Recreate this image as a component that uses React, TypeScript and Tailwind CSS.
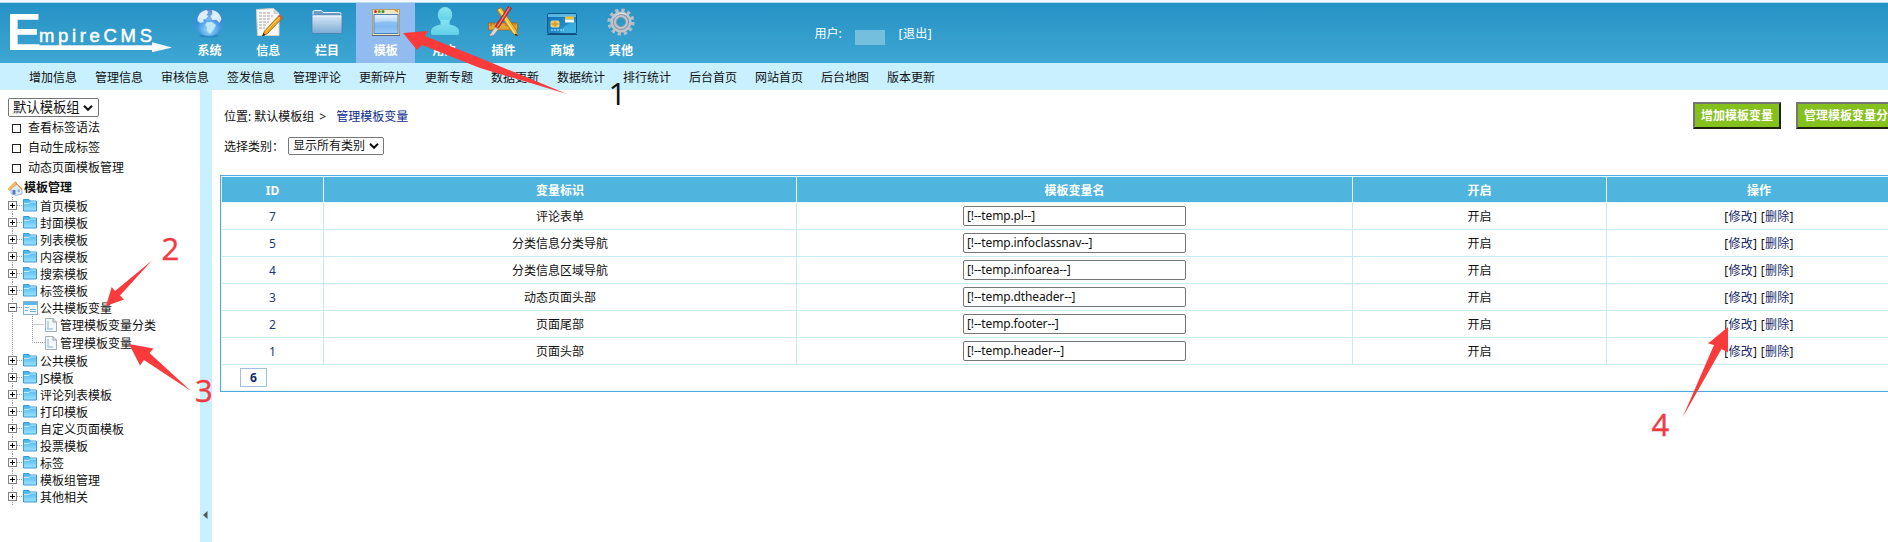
import React from 'react';

type IconProps = { children: React.ReactNode };

const IconBox = ({ children }: IconProps) => (
  <svg width="32" height="34" viewBox="0 0 32 34" className="block">
    {children}
  </svg>
);

const GlobeIcon = () => (
  <IconBox>
    <ellipse cx="16" cy="32" rx="10" ry="1.500" fill="#1b6fa8" opacity="0.500" />
    <circle cx="16" cy="18.500" r="13.700" fill="url(#globe)" stroke="#4a94dc" strokeWidth="0.600" />
    <path d="M4.500 14c1-4 5-7.500 9-8l2 2-2 3 2 1-3 3-2 0 0 3-3 1-3-2z" fill="#e4f3ff" opacity="0.900" />
    <path d="M19 6c5 1 8.500 4 9.500 9l-2 4-3-3-4 0-2-4 2-2z" fill="#e4f3ff" opacity="0.900" />
    <path d="M14 18l5 0 4 3-2 4-4 5-3-3 0-4-2-2z" fill="#c6ebfb" opacity="0.900" />
    <ellipse cx="16" cy="11" rx="10" ry="5.500" fill="#fff" opacity="0.250" />
  </IconBox>
);

const NoteIcon = () => (
  <IconBox>
    <g transform="translate(0 2)">
      <path d="M4.500 3.500l17-1 5.500 5V29.500H5.500z" fill="#f8f8f4" stroke="#d8d4c4" />
      <path d="M21.500 2.500v5.500h5z" fill="#d5d5cf" />
      <path d="M7 7h11M7 10h14M7 13h12M7 16h10M7 19h8M7 22h6" stroke="#a2a8aa" strokeWidth="1" strokeDasharray="3 1" />
      <path d="M10.500 30l2-5L27 9.500l3 3L15.500 27.500z" fill="#f3a51f" stroke="#8a4e0a" strokeWidth="0.700" />
      <path d="M26 10.500l2-2 3 3-2 2z" fill="#d65a37" />
      <path d="M13.500 25.500L28 11" stroke="#ffd766" />
      <path d="M10.500 30l1-3 2 2z" fill="#222" />
    </g>
  </IconBox>
);

const BigFolderIcon = () => (
  <IconBox>
    <g transform="translate(0 1.500)">
      <path d="M2 6.500q0-1.500 1.500-1.500h7l1.500 2h16.500q1.500 0 1.500 1.500v3H2z" fill="#6f9cc0" stroke="#e6f2fa" />
      <rect x="1" y="9.500" width="30" height="18.500" rx="1.200" fill="url(#folderBig)" stroke="#4a7fae" strokeWidth="0.800" />
      <path d="M2 10.500h28" stroke="#f2f8fd" />
    </g>
  </IconBox>
);

const WindowIcon = () => (
  <IconBox>
    <rect x="2.500" y="5.500" width="27" height="26" fill="#f1e7c8" stroke="#b39d6b" />
    <circle cx="5.500" cy="7.500" r="1.500" fill="#d3312b" />
    <circle cx="9.300" cy="7.500" r="1.500" fill="#6f9b24" />
    <circle cx="13" cy="7.500" r="1.500" fill="#3a8e2b" />
    <path d="M24 6l4 3v-3z" fill="#e7912b" />
    <rect x="4" y="10.500" width="24" height="19" fill="url(#pane)" stroke="#4c7cb6" />
    <path d="M5 19q11-3 22-1v11H5z" fill="#77b4ee" opacity="0.550" />
    <path d="M2 31.500h28" stroke="#5a6678" />
  </IconBox>
);

const UserIcon = () => (
  <IconBox>
    <ellipse cx="16" cy="11" rx="7.200" ry="8" fill="url(#person)" />
    <path d="M11.500 16h9v4.500c5 1 9.500 3 9.500 7V29.500q0 1.500-2 1.500H4q-2 0-2-1.500v-2c0-4 4.500-6 9.500-7z" fill="url(#person)" />
  </IconBox>
);

const ToolsIcon = () => (
  <IconBox>
    <rect x="1.500" y="19" width="29" height="7" fill="#e2a23a" stroke="#a0611a" strokeWidth="0.700" />
    <path d="M4 19v3M7 19v2M10 19v3M13 19v2M19 19v3M22 19v2M25 19v3M28 19v2" stroke="#8c5a12" strokeWidth="0.800" />
    <path d="M10 6l4-2.500 15.500 23 1.500 5.500-5-2.500z" fill="#f6bb31" stroke="#a46a12" strokeWidth="0.700" />
    <path d="M12 5l16 25" stroke="#fff0a4" />
    <path d="M21.500 2.500l3 1.500-13 20-3.500-1.500z" fill="#d9362c" stroke="#8d1f18" strokeWidth="0.600" />
    <path d="M22.500 3.500L10 23.500" stroke="#ffb3a8" strokeWidth="0.800" />
    <path d="M8 23.500l3.500 1.500-5 6.500-4.500 .500z" fill="#dcd9d2" stroke="#7a7a7a" strokeWidth="0.500" />
    <path d="M29 29.500l2 2.500-3.500-1z" fill="#222" />
  </IconBox>
);

const CardIcon = () => (
  <IconBox>
    <rect x="1.500" y="9.500" width="29" height="20" rx="1.500" fill="url(#card)" stroke="#0d568f" />
    <path d="M2 11q0-1 1-1h26q1 0 1 1v2H2z" fill="#79d0f2" opacity="0.700" />
    <path d="M14 29q3-9 16-11v10q0 1-1 1z" fill="#54c3ea" opacity="0.500" />
    <rect x="5" y="17" width="8" height="6" rx="1" fill="#f3bd43" stroke="#fbe8a2" strokeWidth="0.800" />
    <path d="M5 20h8M9 17v6" stroke="#b97b12" strokeWidth="0.600" />
    <rect x="19" y="12.500" width="9" height="3" fill="#f3bf30" />
    <rect x="19" y="15.500" width="9" height="3" fill="#f7f7f7" />
    <path d="M5 26h13" stroke="#d5f1fc" strokeDasharray="2 1" />
    <path d="M1 30.500h30" stroke="#174a70" />
  </IconBox>
);

const GearIcon = () => (
  <IconBox>
    <circle cx="16" cy="18" r="11.800" fill="none" stroke="#b4bdc6" strokeWidth="3.600" strokeDasharray="3.300 2.878" />
    <circle cx="16" cy="18" r="7.600" fill="none" stroke="#bcc4cc" strokeWidth="6" />
    <circle cx="16" cy="18" r="7.600" fill="none" stroke="#8f9aa6" strokeWidth="1.200" />
    <circle cx="16" cy="18" r="4.600" fill="none" stroke="#8a949f" strokeWidth="0.800" />
    <path d="M9.500 13a8.500 8.500 0 0 1 11-2.500" fill="none" stroke="#e6eaee" strokeWidth="1" />
  </IconBox>
);

const Gradients = () => (
  <svg width="0" height="0" className="absolute">
    <defs>
      <radialGradient id="globe" cx="0.5" cy="0.75" r="0.8">
        <stop offset="0" stopColor="#9fdcfb" />
        <stop offset="0.5" stopColor="#4598e6" />
        <stop offset="1" stopColor="#1f63c0" />
      </radialGradient>
      <linearGradient id="folderBig" x1="0" y1="0" x2="0" y2="1">
        <stop offset="0" stopColor="#dbe9f6" />
        <stop offset="1" stopColor="#7aa9d3" />
      </linearGradient>
      <linearGradient id="pane" x1="0" y1="0" x2="0" y2="1">
        <stop offset="0" stopColor="#e8f4ff" />
        <stop offset="0.6" stopColor="#8dc0f2" />
        <stop offset="1" stopColor="#bfe2fd" />
      </linearGradient>
      <linearGradient id="person" x1="0" y1="0" x2="0" y2="1">
        <stop offset="0" stopColor="#84e4f0" />
        <stop offset="1" stopColor="#62cfe6" />
      </linearGradient>
      <linearGradient id="card" x1="0" y1="0" x2="1" y2="1">
        <stop offset="0" stopColor="#0f6db5" />
        <stop offset="1" stopColor="#2ba3da" />
      </linearGradient>
      <linearGradient id="folderSmall" x1="0" y1="0" x2="0" y2="1">
        <stop offset="0" stopColor="#45b0ee" />
        <stop offset="1" stopColor="#9be4fd" />
      </linearGradient>
    </defs>
  </svg>
);

const Logo = () => (
  <svg width="180" height="60" viewBox="0 3 180 60" className="block shrink-0 fill-white font-['Liberation_Sans',sans-serif] font-bold">
    <text x="6.500" y="50" fontSize="52" textLength="35" lengthAdjust="spacingAndGlyphs">E</text>
    <text x="39" y="42" fontSize="18.500" fontWeight="400" stroke="#fff" strokeWidth="0.500" textLength="113">mpireCMS</text>
    <rect x="12" y="45.300" width="141" height="4.700" />
    <polygon points="152,42.300 172,47.500 152,52.300" />
  </svg>
);

const tabs = [
  { label: '系统', Icon: GlobeIcon },
  { label: '信息', Icon: NoteIcon },
  { label: '栏目', Icon: BigFolderIcon },
  { label: '模板', Icon: WindowIcon, active: true },
  { label: '用户', Icon: UserIcon },
  { label: '插件', Icon: ToolsIcon },
  { label: '商城', Icon: CardIcon },
  { label: '其他', Icon: GearIcon },
];

const quickLinks = [
  '增加信息', '管理信息', '审核信息', '签发信息', '管理评论', '更新碎片', '更新专题',
  '数据更新', '数据统计', '排行统计', '后台首页', '网站首页', '后台地图', '版本更新',
];

const Header = () => (
  <header className="shrink-0">
    <div className="h-[3px] border-b border-[#b5dcec] bg-[#f3f9fd]" />
    <div className="flex h-[60px] bg-linear-to-b from-[#2592c5] to-[#3ea6d2]">
      <Logo />
      {tabs.map(({ label, Icon, active }) => (
        <div
          key={label}
          className={`flex w-[58.8px] shrink-0 flex-col items-center pt-px text-xs leading-[18px] font-bold text-white ${active ? 'bg-[#92bcef]' : ''}`}
        >
          <Icon />
          <span className="mt-1">{label}</span>
        </div>
      ))}
      <div className="ml-[164px] flex items-center pt-px text-xs text-white">
        <span>用户:</span>
        <span className="mt-2 ml-[13px] h-[15px] w-[30px] bg-[#74bfde]" />
        <span className="ml-[14px] tracking-[0.4px]">[退出]</span>
      </div>
    </div>
    <nav className="flex h-[27px] items-center gap-[18px] bg-[#c9f0ff] pt-0.5 pl-[29px]">
      {quickLinks.map((link) => (
        <a key={link} className="w-12 whitespace-nowrap">{link}</a>
      ))}
    </nav>
  </header>
);

const Chevron = () => (
  <svg width="10" height="8" viewBox="0 0 10 8" className="block">
    <path d="M1 1.800l4 4 4-4" fill="none" stroke="#111" strokeWidth="2" />
  </svg>
);

const Expander = ({ open }: { open?: boolean }) => (
  <svg width="15" height="17" viewBox="0 0 15 17" className="block shrink-0">
    <path d="M4.500 0v17M9 8.500h6" stroke="#999" strokeDasharray="1 1" />
    <rect x="0.500" y="4.500" width="8" height="8" fill="#fff" stroke="#808080" />
    <path d={open ? 'M2 8.500h5' : 'M2 8.500h5M4.500 6v5'} stroke="#000" />
  </svg>
);

const FolderIcon = () => (
  <svg width="14" height="13" viewBox="0 0 14 13" className="block shrink-0">
    <path d="M.5 .500h5.500l1 1.500h6.500v10H.5z" fill="url(#folderSmall)" stroke="#3a9ad8" />
    <path d="M1 4.500h5l1.500-1.500h5.500" fill="none" stroke="#c4edfd" />
  </svg>
);

const OpenFolderIcon = () => (
  <svg width="15" height="14" viewBox="0 0 15 14" className="block shrink-0">
    <rect x="0.500" y="0.500" width="14" height="13" fill="#f3fafe" stroke="#8fb0c4" />
    <rect x="1" y="1" width="13" height="3" fill="#5eb6ea" />
    <path d="M2 6.500h4M2 9.500h3M7 8.500h6M7 10.500h6" stroke="#6fb4dc" />
  </svg>
);

const PageIcon = () => (
  <svg width="12" height="14" viewBox="0 0 12 14" className="block shrink-0">
    <path d="M.5.500h7.500l3.500 3.500v9.500H.5z" fill="#f4f8fa" stroke="#a3b0b8" />
    <path d="M8 .500v3.500h3.500" fill="none" stroke="#8c9aa4" />
    <path d="M3 3v8h5" fill="none" stroke="#a8cfdf" strokeWidth="1.500" />
  </svg>
);

const HomeIcon = () => (
  <svg width="15" height="15" viewBox="0 0 15 15" className="block shrink-0">
    <path d="M3 7.500L9 3l5 5v5l-6 1.500-5-2z" fill="#dfe9f6" stroke="#8ba3c4" strokeWidth="0.700" />
    <path d="M0 8L7 .700l2 1.300-7 7.500z" fill="#f8bb55" stroke="#e09a38" strokeWidth="0.600" />
    <path d="M7 .700l7.500 7-1 1L8 3z" fill="#e88a28" />
    <rect x="4.500" y="9" width="3" height="4.500" fill="#4f7fc4" />
    <rect x="9.500" y="8.500" width="2.500" height="2.500" fill="#8fb4e6" />
  </svg>
);

const Folder = ({ label }: { label: string }) => (
  <li className="flex h-[17px] items-center">
    <Expander />
    <FolderIcon />
    <span className="mt-[2px] ml-[3px]">{label}</span>
  </li>
);

const Leaf = ({ label, last }: { label: string; last?: boolean }) => (
  <li className="flex h-[18px] items-center">
    <svg width="37" height="18" viewBox="0 0 37 18" className="block shrink-0">
      <path d={last ? 'M4.500 0v18M24.500 0v8.500h12' : 'M4.500 0v18M24.500 0v18M24.500 8.500h12'} fill="none" stroke="#999" strokeDasharray="1 1" />
    </svg>
    <PageIcon />
    <span className="mt-[1px] ml-[3px]">{label}</span>
  </li>
);

const Sidebar = () => (
  <aside className="w-[200px] shrink-0 pt-2 pl-2">
    <div className="flex h-[19px] w-[91px] items-center justify-between rounded-[2px] border border-[#767676] pr-[5px] pl-1 text-[13.333px] leading-[17px]">
      <span>默认模板组</span>
      <Chevron />
    </div>
    <ul className="mt-[1px]">
      {['查看标签语法', '自动生成标签', '动态页面模板管理'].map((item) => (
        <li key={item} className="flex h-5 items-center pl-1">
          <span className="h-[9px] w-[9px] border-[1.5px] border-[#222]" />
          <span className="ml-[7px]">{item}</span>
        </li>
      ))}
    </ul>
    <div className="mt-[1px] flex h-[18px] items-center font-bold">
      <HomeIcon />
      <span className="ml-[1px]">模板管理</span>
    </div>
    <ul>
      {['首页模板', '封面模板', '列表模板', '内容模板', '搜索模板', '标签模板'].map((f) => (
        <Folder key={f} label={f} />
      ))}
      <li className="flex h-[17px] items-center">
        <Expander open />
        <OpenFolderIcon />
        <span className="mt-[2px] ml-[2px]">公共模板变量</span>
      </li>
      <Leaf label="管理模板变量分类" />
      <Leaf label="管理模板变量" last />
      {['公共模板', 'JS模板', '评论列表模板', '打印模板', '自定义页面模板', '投票模板', '标签', '模板组管理', '其他相关'].map((f) => (
        <Folder key={f} label={f} />
      ))}
    </ul>
  </aside>
);

const rows = [
  { id: 7, name: '评论表单', variable: '[!--temp.pl--]' },
  { id: 5, name: '分类信息分类导航', variable: '[!--temp.infoclassnav--]' },
  { id: 4, name: '分类信息区域导航', variable: '[!--temp.infoarea--]' },
  { id: 3, name: '动态页面头部', variable: '[!--temp.dtheader--]' },
  { id: 2, name: '页面尾部', variable: '[!--temp.footer--]' },
  { id: 1, name: '页面头部', variable: '[!--temp.header--]' },
];

const columns = 'grid grid-cols-[101px_472px_555px_253px_304px] gap-x-px';

const VariableTable = () => (
  <div className="ml-2 w-[1693px] shrink-0 border border-[#4fa9dc] bg-[#c8e9f6] text-center">
    <div className="border border-[#e6f6fd]">
      <div className={`${columns} h-[26px] bg-[#e6f6fd] pb-px leading-[27px] font-bold text-white`}>
        {['ID', '变量标识', '模板变量名', '开启', '操作'].map((h) => (
          <div key={h} className="h-[25px] bg-[#4fb4de]">{h}</div>
        ))}
      </div>
      {rows.map((row) => (
        <div key={row.id} className={`${columns} h-[27px] pb-px leading-[27px]`}>
          <div className="h-[26px] bg-white text-[#1c3a70]">{row.id}</div>
          <div className="h-[26px] bg-white">{row.name}</div>
          <div className="flex h-[26px] items-center justify-center bg-white">
            <div className="h-5 w-[223px] rounded-[2px] border border-[#767676] pl-[3px] text-left leading-[18px] tracking-[-0.14px]">{row.variable}</div>
          </div>
          <div className="h-[26px] bg-white">开启</div>
          <div className="h-[26px] bg-white tracking-[0.3px]">
            [<a className="text-[#15296b]">修改</a>] [<a className="text-[#15296b]">删除</a>]
          </div>
        </div>
      ))}
      <div className="flex h-[25px] items-center bg-white pl-[18px]">
        <div className="h-[19px] w-[27px] border border-[#9fc0e4] leading-[18px] font-bold text-[#15296b]">6</div>
      </div>
    </div>
  </div>
);

const ActionButton = ({ label }: { label: string }) => (
  <button className="h-[27px] shrink-0 border-2 border-t-[#767676] border-r-[#1c2410] border-b-[#1c2410] border-l-[#767676] bg-[#84c11d] px-[6px] pt-px leading-[22px] font-bold whitespace-nowrap text-white">
    {label}
  </button>
);

const Main = () => (
  <main className="flex min-w-0 flex-1 flex-col overflow-hidden">
    <div className="flex h-[46px] shrink-0 items-end">
      <div className="flex w-[1481px] shrink-0 items-center self-stretch pt-2 pl-3">
        <span>位置: 默认模板组</span>
        <span className="ml-[5px]">&gt;</span>
        <a className="ml-[10px] text-[#0e2c8c]">管理模板变量</a>
      </div>
      <div className="flex gap-[15px] pb-[7px]">
        <ActionButton label="增加模板变量" />
        <ActionButton label="管理模板变量分类" />
      </div>
    </div>
    <div className="flex h-[39px] shrink-0 items-start pt-px pl-3">
      <span className="mt-px w-16 leading-[18px]">选择类别：</span>
      <div className="flex h-[18px] w-24 items-center justify-between rounded-[2px] border border-[#767676] px-1 leading-4">
        <span>显示所有类别</span>
        <Chevron />
      </div>
    </div>
    <VariableTable />
  </main>
);

const Annotations = () => (
  <svg width="1888" height="542" viewBox="0 0 1888 542" className="pointer-events-none absolute top-0 left-0 font-['Open_Sans',sans-serif] text-[31px]">
    <g fill="#fb3b3b">
      <polygon points="403,33 428,31 425,36 480,58 567,94 480,68 422,45 417,50" />
      <polygon points="106,306 111.700,287 115,291 152,260.500 120,295.500 124,299.500" />
      <polygon points="129,344 153.500,348.500 149.500,353 191,391 144,360 140,365.500" />
      <polygon points="1728,327 1708,343.500 1714,345 1682.500,417.500 1721.500,349 1728,352.500" />
    </g>
    <g fill="#f33a42" stroke="#f33a42" strokeWidth="0.400">
      <text x="161.500" y="260">2</text>
      <text x="195" y="402">3</text>
      <text x="1651.500" y="436">4</text>
    </g>
    <text x="608.500" y="105" fill="#111">1</text>
  </svg>
);

export default function App() {
  return (
    <div className="relative flex h-[542px] w-[1888px] flex-col overflow-hidden bg-white font-['Noto_Sans','Noto_Sans_CJK_SC',sans-serif] text-xs text-[#111]">
      <Gradients />
      <Header />
      <div className="flex min-h-0 flex-1">
        <Sidebar />
        <div className="flex w-3 shrink-0 justify-center bg-[#c9f0ff] pt-[421px] pr-[2px]">
          <svg width="5" height="8" viewBox="0 0 5 8" className="block">
            <path d="M4.500 0v8L0 4z" fill="#555" />
          </svg>
        </div>
        <Main />
      </div>
      <Annotations />
    </div>
  );
}
